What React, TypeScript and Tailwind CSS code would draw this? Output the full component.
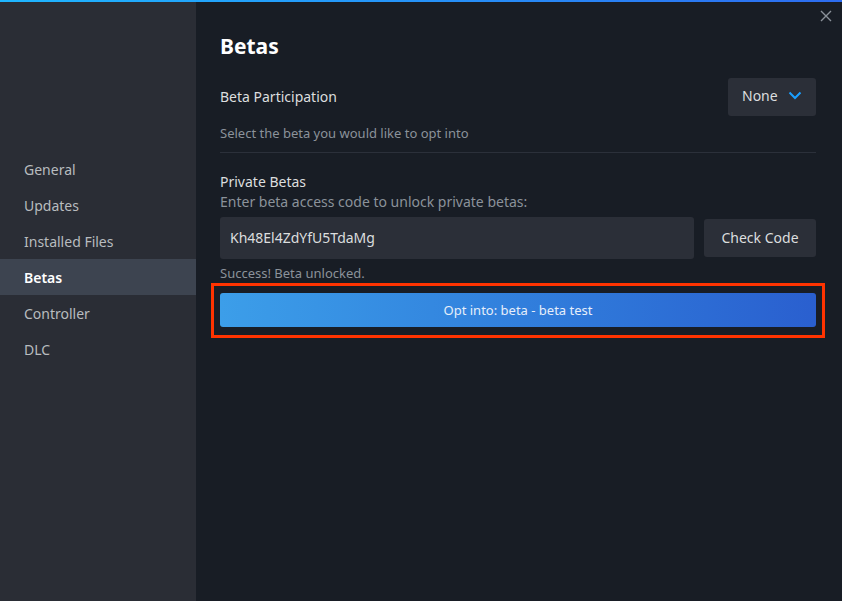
import React from "react";

const navItems = ["General", "Updates", "Installed Files", "Betas", "Controller", "DLC"];

const App: React.FC = () => {
  const active = "Betas";
  return (
    <div
      className="relative flex h-[601px] w-[842px] overflow-hidden bg-[#181d25] text-[#dcdedf]"
      style={{ fontFamily: '"Noto Sans", "Open Sans", Arial, sans-serif' }}
    >
      <div className="absolute left-0 right-0 top-0 h-[2px] bg-gradient-to-r from-[#1fb6ff] to-[#2d6cf0]" />

      {/* sidebar */}
      <div className="flex w-[196px] shrink-0 flex-col bg-[#2a2d35] pt-[151px]">
        {navItems.map((item) => (
          <div
            key={item}
            className={`flex h-9 items-center pl-6 text-[14px] ${
              item === active ? "bg-[#3d4450] font-semibold text-white" : "text-[#b8bcbf]"
            }`}
          >
            {item}
          </div>
        ))}
      </div>

      {/* content */}
      <div className="flex flex-1 flex-col pl-6 pr-[26px] pt-[31px]">
        <button className="absolute right-[10px] top-[10px] text-[#8b929a]">
          <svg width="12" height="12" viewBox="0 0 12 12" fill="none" stroke="currentColor" strokeWidth="1.4">
            <path d="M1 1L11 11M11 1L1 11" />
          </svg>
        </button>

        <h1 className="text-[21px] font-bold leading-[30px] text-white">Betas</h1>

        <div className="mt-[17px] flex items-center justify-between">
          <span className="-mt-[2px] text-[14px] text-[#dcdedf]">Beta Participation</span>
          <button className="flex h-[38px] w-[88px] items-center gap-[10px] rounded-[3px] bg-[#2b2f38] pb-[3px] pl-[14px] text-[14px] text-[#dcdedf]">
            None
            <svg width="14" height="9" viewBox="0 0 14 9" fill="none" stroke="#1a9fff" strokeWidth="2">
              <path d="M1.5 1.5L7 7L12.5 1.5" />
            </svg>
          </button>
        </div>

        <div className="mt-[8px] text-[13px] text-[#8b929a]">Select the beta you would like to opt into</div>
        <div className="mt-[8px] h-px bg-[#2b303a]" />

        <div className="mt-[19px] text-[14px] leading-5 text-[#dcdedf]">Private Betas</div>
        <div className="text-[14px] leading-5 text-[#8b929a]">Enter beta access code to unlock private betas:</div>

        <div className="mt-[5px] flex items-center gap-[10px]">
          <div className="flex h-[42px] flex-1 items-center rounded-[3px] bg-[#2b2f38] pl-[10px] text-[14px] text-[#dcdedf]">
            Kh48El4ZdYfU5TdaMg
          </div>
          <button className="h-[38px] w-[112px] rounded-[3px] bg-[#2b2f38] text-[14px] text-[#dcdedf]">Check Code</button>
        </div>

        <div className="mt-[5px] text-[13px] text-[#8b929a]">Success! Beta unlocked.</div>

        <div className="relative mt-[10px]">
          <div className="pointer-events-none absolute -left-[9px] -right-[9px] -top-[10px] -bottom-[11px] border-[3px] border-[#ff3300]" />
          <button className="h-[34px] w-full rounded-[3px] bg-gradient-to-r from-[#3c9ee9] to-[#2a5fcf] pt-[2px] text-[13px] text-[#e6eefa]">
            Opt into: beta - beta test
          </button>
        </div>
      </div>
    </div>
  );
};

export default App;
